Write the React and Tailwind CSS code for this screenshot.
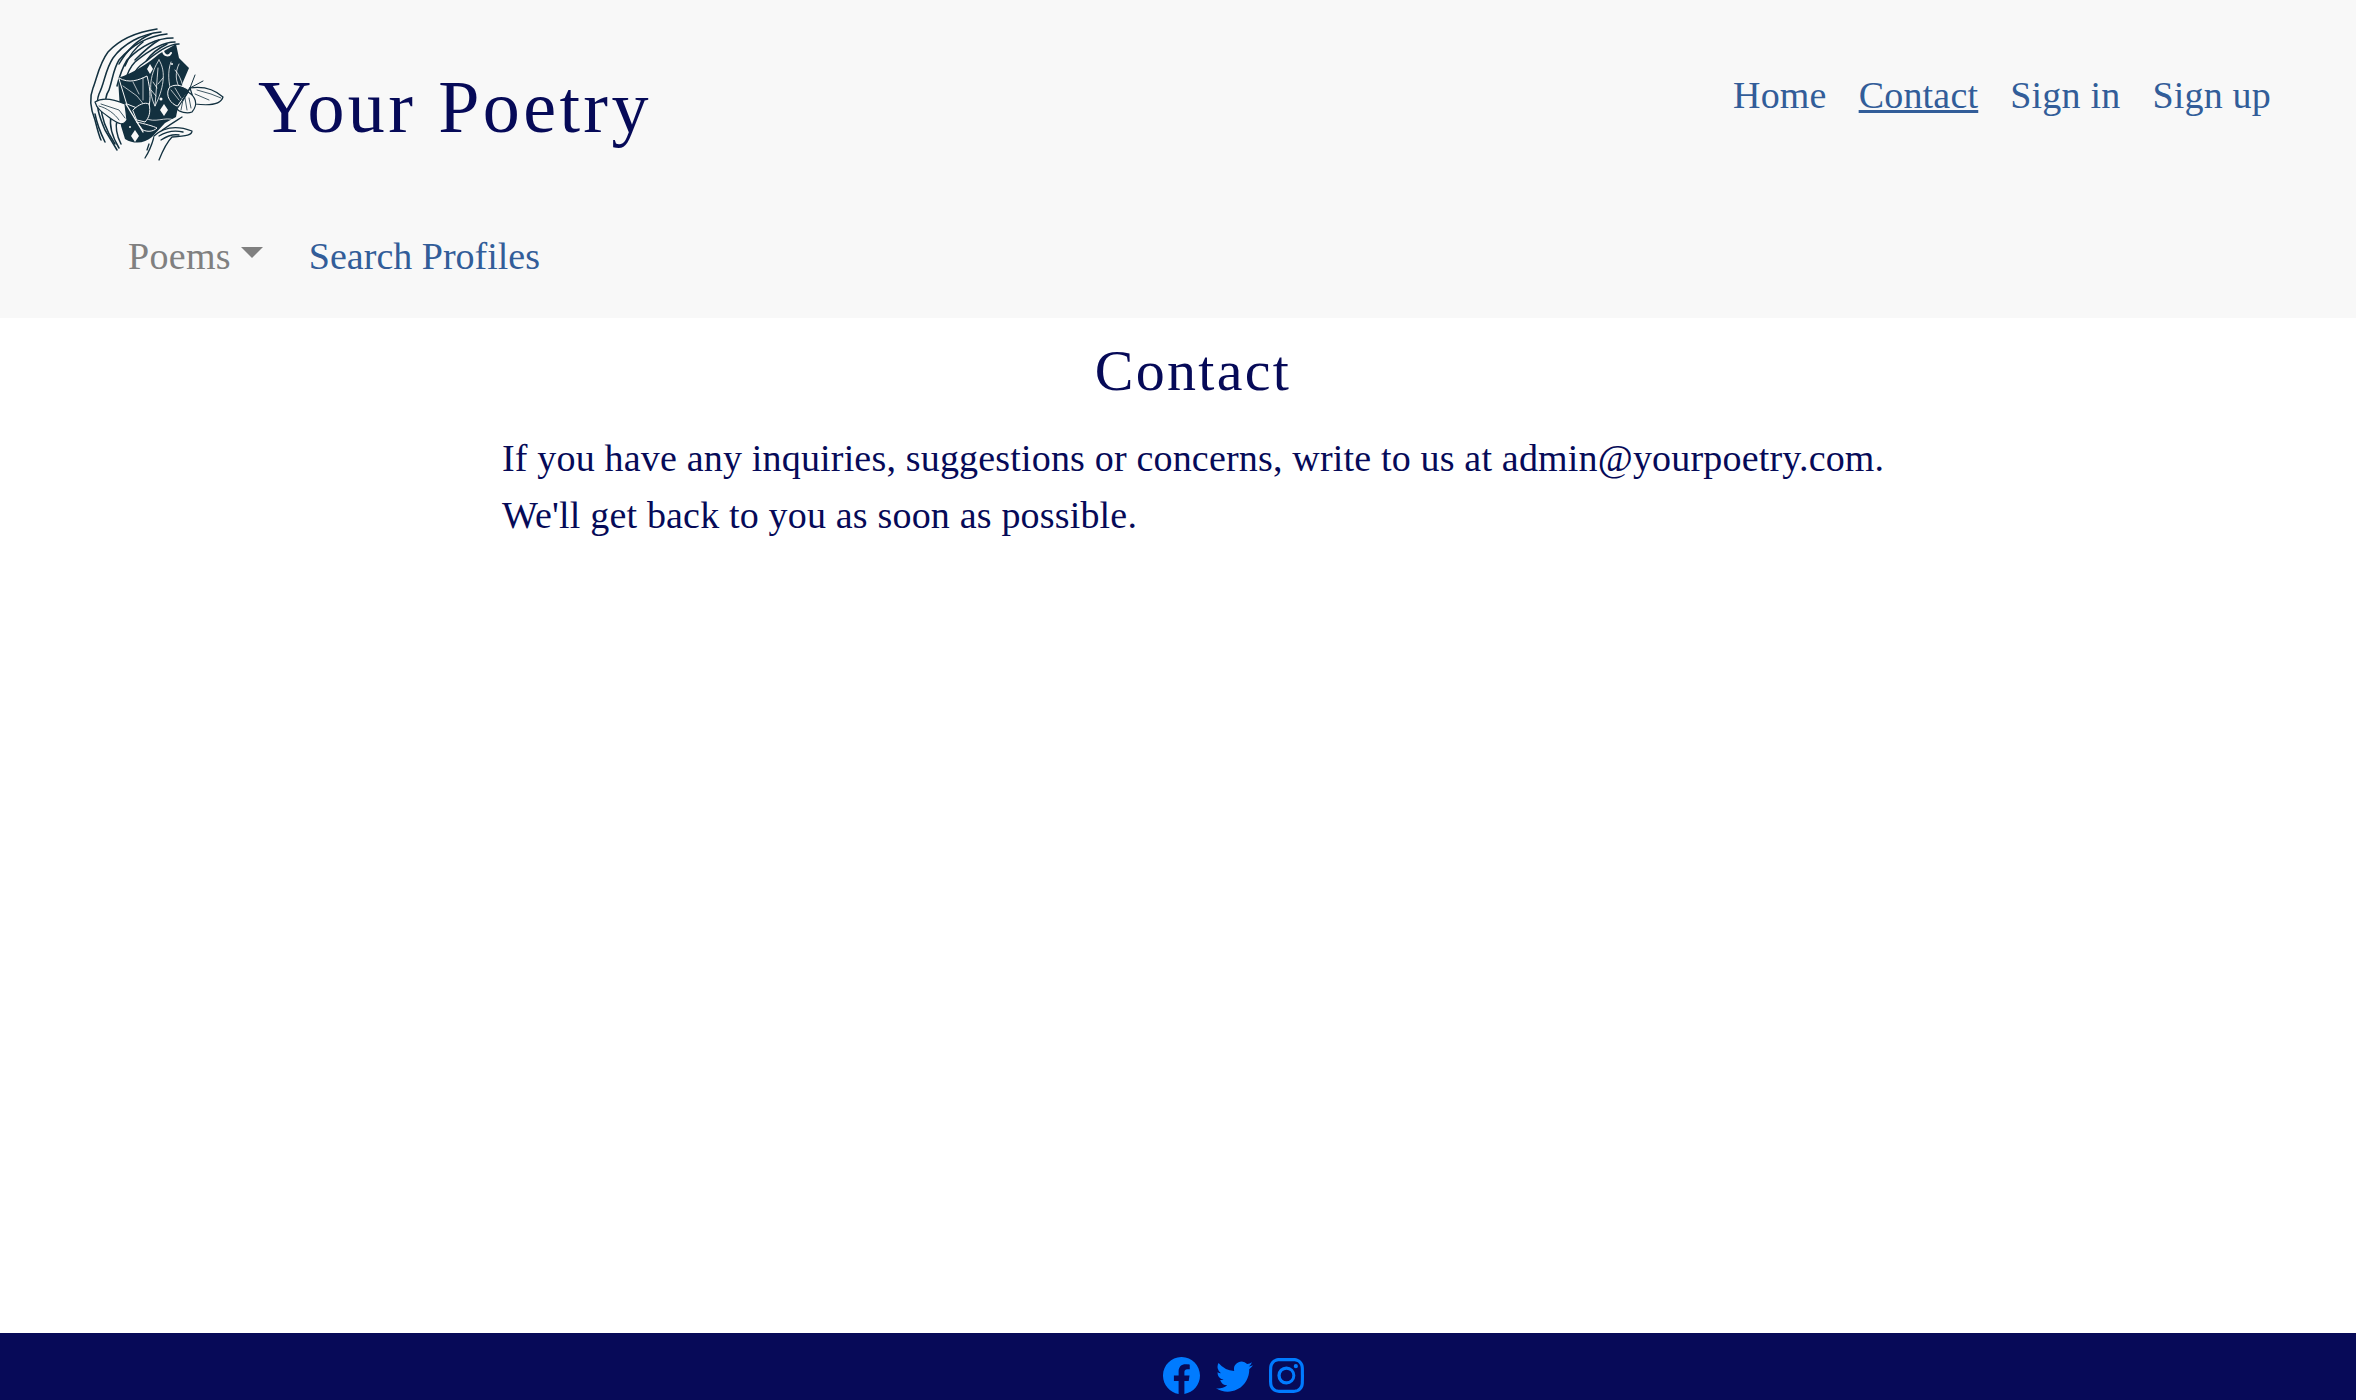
import { BsFacebook, BsInstagram, BsTwitter } from "react-icons/bs";

const hairStrands = [
  "M82 9 C62 12 44 20 33 32 C24 44 22 58 18 68 C14 78 16 90 20 100 C22 108 24 116 26 120",
  "M86 12 C66 14 48 24 38 38 C30 50 30 62 24 74 C20 84 24 96 30 110 L42 130",
  "M92 14 C72 16 56 26 44 40 C38 50 38 58 34 70 C30 76 30 82 32 88",
  "M98 18 C80 18 64 28 52 40 C46 50 44 58 42 66",
  "M100 22 C86 22 72 32 60 42 C54 48 52 54 50 62",
  "M76 14 C62 20 52 30 44 44",
  "M104 24 C92 24 80 34 70 42 C64 46 60 50 58 56",
  "M68 22 C60 28 54 36 50 46",
  "M84 20 C74 26 66 34 60 40",
  "M92 24 C84 28 76 34 72 40",
  "M26 84 C26 100 32 112 40 124",
  "M36 96 C34 106 38 118 44 128",
  "M20 94 C22 104 26 114 30 122",
  "M42 100 C40 108 42 116 46 124",
];

const leafLines = [
  "M84 40 C92 52 88 70 80 86 C72 70 76 52 84 40 Z",
  "M83 48 C82 60 81 74 80 86",
  "M78 62 L82 68 M76 70 L81 76 M88 58 L83 64",
  "M70 98 C80 104 90 96 99 100",
  "M96 42 C92 52 94 64 96 72",
  "M104 44 C100 52 100 62 106 70",
  "M100 50 C104 54 106 60 108 66",
];

function Logo() {
  return (
    <svg viewBox="0 0 160 150" className="h-[150px] w-[160px] shrink-0" fill="none" stroke="#12303f" strokeLinecap="round" strokeLinejoin="round">
      {/* face */}
      <path
        fill="#12303f"
        stroke="none"
        d="M101 24 L84 34 C72 44 60 52 43 58 L46 106 L50 119 C60 125 70 123 77 117 L90 103 L101 97 L108 62 L114 48 L104 38 Z"
      />
      {/* hair */}
      <g strokeWidth="1.5">
        {hairStrands.map((d) => (
          <path key={d} d={d} />
        ))}
      </g>
      {/* moon and stars */}
      <path stroke="#f8f8f8" strokeWidth="2" d="M88 31 C89 36 94 37 96 33" />
      <g fill="#f8f8f8" stroke="none">
        <path d="M75 44 L78 49 L75 54 L72 49 Z" />
        <path d="M89 84 L93 90 L89 96 L85 90 Z" />
        <path d="M60 110 L64 116 L60 122 L56 116 Z" />
        <circle cx="86" cy="79" r="1.5" />
        <circle cx="97" cy="44" r="1" />
        <circle cx="70" cy="64" r="1" />
        <circle cx="55" cy="107" r="1" />
        <circle cx="70" cy="110" r="1" />
      </g>
      <g stroke="#f8f8f8" strokeWidth="0.8">
        {leafLines.map((d) => (
          <path key={d} d={d} />
        ))}
      </g>
      {/* left butterfly */}
      <path fill="#12303f" stroke="#f8f8f8" strokeWidth="1" d="M44 58 C54 64 64 60 72 56 C76 70 76 84 72 92 L52 84 Z" />
      <path stroke="#f8f8f8" strokeWidth="0.7" d="M48 66 L62 76 L70 86 M58 62 L64 74 M68 58 L68 80" />
      <path fill="#f8f8f8" strokeWidth="1.2" d="M50 84 C36 78 26 78 20 82 C22 90 30 94 38 100 C44 104 48 106 52 100 Z" />
      <path fill="#12303f" stroke="#f8f8f8" strokeWidth="1" d="M58 90 C64 84 70 82 74 84 C76 92 74 98 70 102 L62 100 Z" />
      <path fill="#12303f" stroke="#f8f8f8" strokeWidth="1" d="M62 102 C70 104 78 106 82 108 C78 112 72 112 68 110 Z" />
      <path stroke="#f8f8f8" strokeWidth="1.4" d="M51 84 L68 112" />
      <path strokeWidth="0.8" d="M26 84 L44 90 L50 98 M24 86 C32 88 40 94 44 100" />
      {/* right butterfly */}
      <path fill="#12303f" stroke="#f8f8f8" strokeWidth="1" d="M114 70 C106 64 98 64 94 68 C90 76 96 84 102 86 Z" />
      <path stroke="#f8f8f8" strokeWidth="0.7" d="M96 70 L104 80 M100 68 L106 78" />
      <path fill="#f8f8f8" strokeWidth="1.2" d="M115 68 C128 66 140 70 148 77 C146 84 136 86 120 84 Z" />
      <path fill="#f8f8f8" strokeWidth="1.2" d="M113 72 C120 76 124 84 117 92 C112 94 104 92 102 89 Z" />
      <path strokeWidth="0.8" d="M122 70 L136 74 L146 78 M120 74 L134 80 M110 78 L112 90 M108 80 L106 90 M114 78 L116 88" />
      <path strokeWidth="1.6" d="M115 68 L108 80" />
      <path strokeWidth="1" d="M115 68 L120 55 M115 68 L128 61" />
      {/* hand */}
      <g strokeWidth="1.3">
        <path fill="#f8f8f8" d="M107 97 C96 104 86 110 79 117 C77 124 74 132 70 138" />
        <path fill="#f8f8f8" d="M79 116 C90 106 104 106 117 111 C117 115 112 116 97 117 C92 122 88 130 84 140" />
        <path d="M84 116 C92 111 100 110 108 112 M86 120 C92 116 98 114 104 115 M74 124 L72 130" />
      </g>
    </svg>
  );
}

export default function App() {
  return (
    <div className="flex min-h-[1400px] flex-col bg-white font-['Liberation_Serif',serif] text-[#060a58]">
      <header className="h-[318px] bg-[#f8f8f8]">
        <div className="flex items-start justify-between pr-[85px] pl-[75px] pt-5">
          <div className="flex items-center gap-[23px]">
            <Logo />
            <h1 className="pt-6 text-[74px] leading-none tracking-[3.4px]">Your Poetry</h1>
          </div>
          <nav className="flex gap-8 pt-[47px] text-[38px] leading-[57px] tracking-[0.2px] text-[#325d99]">
            <a href="#">Home</a>
            <a href="#" className="underline">Contact</a>
            <a href="#">Sign in</a>
            <a href="#">Sign up</a>
          </nav>
        </div>
        <div className="flex items-center gap-[46px] pl-[128px] pt-[58px] text-[38px] leading-[57px] text-[#325d99]">
          <button className="flex items-center gap-[10px] tracking-[0.3px] text-[#808080]">
            Poems
            <span className="mb-2 h-0 w-0 border-x-[11px] border-t-[11px] border-x-transparent border-t-[#808080]" />
          </button>
          <a href="#">Search Profiles</a>
        </div>
      </header>
      <main className="flex-1 pt-[11px]">
        <h2 className="pl-[30px] text-center text-[58px] leading-[84px] tracking-[2.3px]">Contact</h2>
        <div className="ml-[502px] pt-[17px] text-[38px] leading-[57px] tracking-[0.18px]">
          <p>If you have any inquiries, suggestions or concerns, write to us at admin@yourpoetry.com.</p>
          <p>We'll get back to you as soon as possible.</p>
        </div>
      </main>
      <footer className="flex h-[67px] items-start justify-center bg-[#070a58] pl-[111px] pt-6 text-[#007bff]">
        <div className="flex items-center gap-4">
          <BsFacebook size={37} />
          <BsTwitter size={37} />
          <BsInstagram size={35} />
        </div>
      </footer>
    </div>
  );
}
